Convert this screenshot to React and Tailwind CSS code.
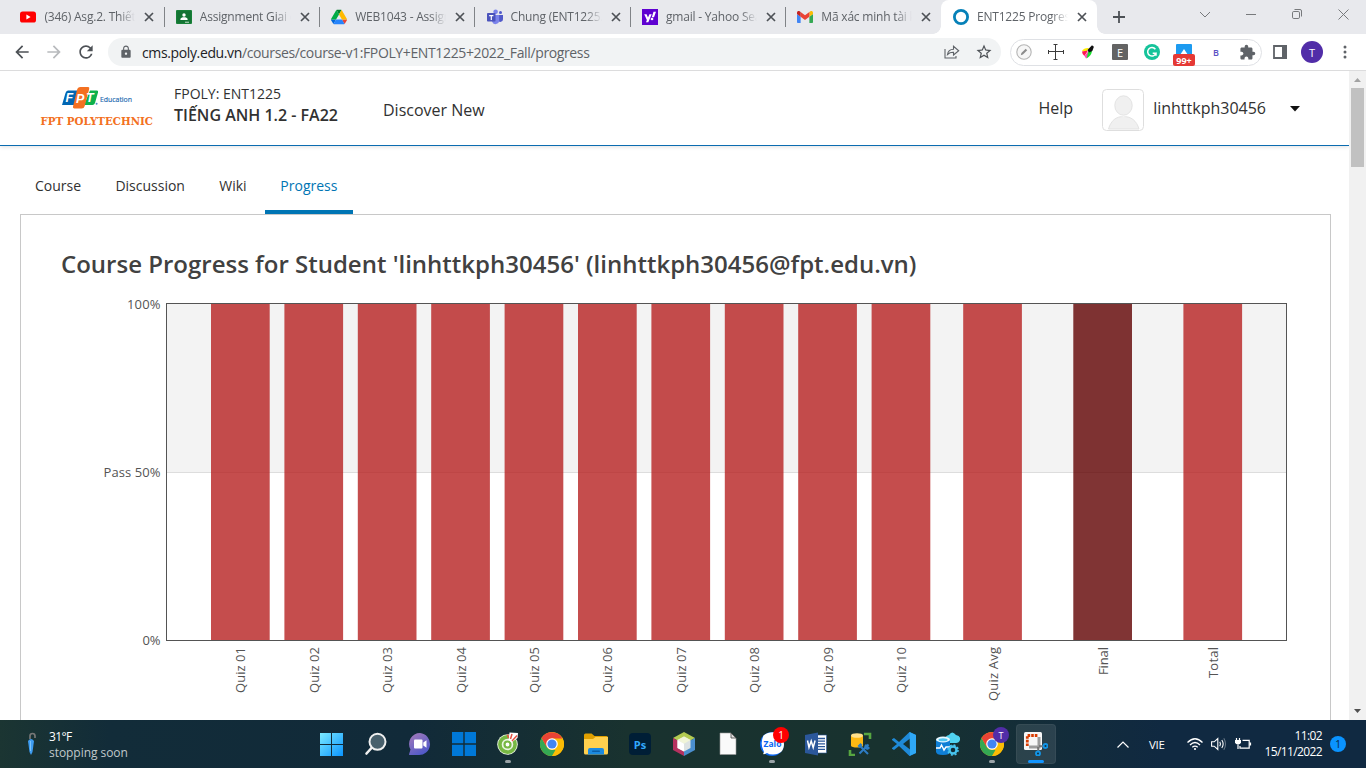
import React from 'react';
import { MdArrowBack, MdArrowForward, MdRefresh, MdLock, MdStarBorder, MdExtension } from 'react-icons/md';

/* ---------- tab favicons ---------- */
const Youtube = () => (
  <svg width="16" height="16" viewBox="0 0 16 16">
    <rect x="0" y="2.4" width="16" height="11.2" rx="2.6" fill="#f00" />
    <path d="M6.4 5.6v4.8l4.2-2.4z" fill="#fff" />
  </svg>
);
const Classroom = () => (
  <svg width="16" height="16" viewBox="0 0 16 16">
    <rect y="1" width="16" height="14" rx="1" fill="#188038" />
    <rect x="1.2" y="2.2" width="13.6" height="11.6" fill="#137333" />
    <circle cx="8" cy="6" r="1.7" fill="#fff" />
    <path d="M4.4 11v-.8C4.4 8.8 6.4 8.3 8 8.3s3.6.5 3.6 1.900V11z" fill="#fff" />
    <rect x="9" y="12.600" width="4" height="1.4" fill="#e8f5e9" opacity=".6" />
  </svg>
);
const Drive = () => (
  <svg width="16" height="16" viewBox="0 0 87.300 78">
    <path d="m6.600 66.850 3.850 6.650c.8 1.400 1.950 2.500 3.300 3.300l13.750-23.800h-27.500c0 1.550.4 3.100 1.200 4.500z" fill="#0066da" />
    <path d="m43.650 25-13.750-23.800c-1.350.8-2.500 1.900-3.300 3.300l-25.400 44a9.060 9.060 0 0 0-1.200 4.500h27.500z" fill="#00ac47" />
    <path d="m73.550 76.800c1.350-.8 2.500-1.900 3.300-3.300l1.600-2.750 7.650-13.250c.8-1.400 1.200-2.950 1.200-4.500h-27.500l5.850 11.500z" fill="#ea4335" />
    <path d="m43.650 25 13.750-23.800c-1.350-.8-2.900-1.200-4.500-1.200h-18.500c-1.600 0-3.150.45-4.500 1.200z" fill="#00832d" />
    <path d="m59.800 53h-32.300l-13.750 23.800c1.350.8 2.900 1.200 4.500 1.200h50.800c1.600 0 3.150-.45 4.500-1.200z" fill="#2684fc" />
    <path d="m73.400 26.500-12.700-22c-.8-1.400-1.950-2.500-3.300-3.300l-13.750 23.800 16.150 28h27.450c0-1.550-.4-3.100-1.200-4.500z" fill="#ffba00" />
  </svg>
);
const Teams = () => (
  <svg width="16" height="16" viewBox="0 0 16 16">
    <circle cx="8.600" cy="2.800" r="2.300" fill="#7b83eb" />
    <circle cx="13.500" cy="3.600" r="1.500" fill="#5059c9" />
    <path d="M11 6h5v4.300a2.600 2.600 0 0 1-5 1z" fill="#5059c9" />
    <path d="M5 6h7.200v5.600a3.700 3.700 0 0 1-7.200 1z" fill="#7b83eb" />
    <rect x="0" y="4" width="8.500" height="8.500" rx=".8" fill="#4b53bc" />
    <path d="M2.200 6.100h4.200v1.100H4.900v3.700H3.700V7.200H2.200z" fill="#fff" />
  </svg>
);
const Yahoo = () => (
  <svg width="16" height="16" viewBox="0 0 16 16">
    <rect width="16" height="16" fill="#5f01d1" />
    <path d="M2.200 5.200h2.400l1.400 3.400 1.400-3.400h2.300L6.300 13.300H4L4.900 11zM11.500 2.700h2.500L12 8.200H9.800z" fill="#fff" />
    <circle cx="10" cy="10" r="1.350" fill="#fff" />
  </svg>
);
const Gmail = () => (
  <svg width="16" height="16" viewBox="52 42 88 66">
    <path fill="#4285f4" d="M58 108h14V74L52 59v43c0 3.320 2.690 6 6 6" />
    <path fill="#34a853" d="M120 108h14c3.320 0 6-2.690 6-6V59l-20 15" />
    <path fill="#fbbc04" d="M120 48v26l20-15v-8c0-7.420-8.470-11.650-14.400-7.200" />
    <path fill="#ea4335" d="M72 74V48l24 18 24-18v26L96 92" />
    <path fill="#c5221f" d="M52 51v8l20 15V48l-5.600-4.200c-5.940-4.450-14.400-.220-14.400 7.200" />
  </svg>
);
const Ring = () => (
  <svg width="16" height="16" viewBox="0 0 16 16">
    <circle cx="8" cy="8" r="6.600" fill="none" stroke="#0681b8" strokeWidth="2.800" />
  </svg>
);
const Close = () => (
  <svg width="10" height="10" viewBox="0 0 10 10" className="shrink-0">
    <path d="M1 1l8 8M9 1l-8 8" stroke="#4d5156" strokeWidth="1.700" />
  </svg>
);

const tabs = [
  { icon: Youtube, label: '(346) Asg.2. Thiết' },
  { icon: Classroom, label: 'Assignment Giai đ' },
  { icon: Drive, label: 'WEB1043 - Assign' },
  { icon: Teams, label: 'Chung (ENT1225.' },
  { icon: Yahoo, label: 'gmail - Yahoo Sear' },
  { icon: Gmail, label: 'Mã xác minh tài k' },
];

const TabBody = ({ icon: Icon, label }) => (
  <>
    <Icon />
    <div className="ml-2 mr-[9px] w-[91px] shrink-0 overflow-hidden whitespace-nowrap text-[12px] tracking-[-0.2px] text-[#5f6368] [mask-image:linear-gradient(to_right,#000_82%,transparent)]">
      {label}
    </div>
    <Close />
  </>
);

function TabStrip() {
  return (
    <div className="flex h-[34px] bg-[#e8e9ed] pl-[8.6px]">
      {tabs.map((t, i) => (
        <div key={t.label} className="relative flex w-[155.4px] shrink-0 items-center pl-[11.800px]">
          <TabBody {...t} />
          {i < 5 && <span className="absolute -right-[0.6px] top-[7px] h-5 w-px bg-[#808387]" />}
        </div>
      ))}
      <div className="relative flex w-[156px] shrink-0 items-center rounded-t-lg bg-white pl-[12px]">
        <TabBody icon={Ring} label="ENT1225 Progress" />
        <span className="absolute -left-2 bottom-0 size-2 bg-[radial-gradient(circle_at_0_0,#e8e9ed_7.5px,#fff_8px)]" />
        <span className="absolute -right-2 bottom-0 size-2 bg-[radial-gradient(circle_at_100%_0,#e8e9ed_7.5px,#fff_8px)]" />
      </div>
      <div className="flex flex-1 items-center pl-[16px]">
        <svg width="12" height="12" viewBox="0 0 12 12"><path d="M6 0v12M0 6h12" stroke="#4d5156" strokeWidth="1.800" /></svg>
        <div className="mb-[6px] ml-auto flex items-center pr-[17px] text-[#77797c]">
          <svg width="10" height="10" viewBox="0 0 10 10" fill="none" stroke="currentColor"><path d="M0 3l5 5 5-5" /></svg>
          <svg className="ml-[36px]" width="10" height="10" viewBox="0 0 10 10" stroke="currentColor"><path d="M0 5.500h10" /></svg>
          <svg className="ml-[36px]" width="10" height="10" viewBox="0 0 10 10" fill="none" stroke="currentColor"><rect x=".5" y="2.500" width="7" height="7" rx="1.300" /><path d="M2.500.5H8A1.500 1.500 0 0 1 9.500 2v5.500" /></svg>
          <svg className="ml-[36px]" width="11" height="11" viewBox="0 0 11 11" stroke="currentColor"><path d="M.5.5l10 10M10.500.5l-10 10" /></svg>
        </div>
      </div>
    </div>
  );
}

function Extensions() {
  return (
    <div className="ml-[9px] flex h-[27px] w-[252px] shrink-0 items-center rounded-full border border-[#dfe1e5] pl-[5px]">
      <svg width="16" height="16" viewBox="0 0 16 16"><circle cx="8" cy="8" r="7.200" fill="#f6f6f6" stroke="#b5b5b5" strokeWidth="1.100" /><path d="M4.800 11.200l.6-2.100 4.300-4.300 1.500 1.500-4.300 4.300z" fill="#8b8b8b" /></svg>
      <svg className="ml-[16px]" width="16" height="16" viewBox="0 0 16 16" stroke="#3c3c3c" fill="none"><path d="M.5 6v4M.5 7.500h15M15.500 6v4M7.500 .5v15M5.500 .5h4M5.500 15.500h4" /></svg>
      <svg className="ml-[16px]" width="16" height="16" viewBox="0 0 16 16"><path d="M2 7Q4 3.500 9 4L6 8z" fill="#ffee00" /><path d="M2 7.500L8 6.500 4.500 12Q2 10 2 7.500z" fill="#ff1450" /><path d="M4.500 12L8.500 7l1 4.500L6 14.500z" fill="#ff4bb0" /><path d="M8.500 7h3.300Q12 11 6.500 14.500z" fill="#16e02a" /><path d="M7.500 6L12 1.300l1.900 1.500L12.300 7 9 8.500z" fill="#111" /></svg>
      <div className="ml-[16px] flex size-4 items-center justify-center rounded-[1px] bg-[#636363] text-[11px] leading-none text-white">E</div>
      <svg className="ml-[16px]" width="16" height="16" viewBox="0 0 16 16"><circle cx="8" cy="8" r="8" fill="#15c39a" /><path d="M11.400 5.200A4.300 4.300 0 1 0 12 9.300H8.700M12 9.300v2.400" fill="none" stroke="#fff" strokeWidth="1.500" /></svg>
      <div className="relative ml-[16px] size-4 rounded-[1px] bg-[#1d9bf0]">
        <svg width="16" height="16" viewBox="0 0 16 16"><path d="M8 5l4 6H4z" fill="#fff" /></svg>
        <span className="absolute -left-[3px] top-[10px] flex h-[12px] w-[22px] items-center justify-center rounded-[2px] bg-[#e53935] text-[9px] font-bold leading-none text-white">99+</span>
      </div>
      <div className="ml-[16px] w-4 text-center text-[9px] font-semibold leading-none text-[#5b50c4]">B</div>
      <MdExtension className="ml-[15px] size-[17px] text-[#5f6368]" />
    </div>
  );
}

function Toolbar() {
  return (
    <div className="flex h-[37px] items-center border-b border-[#dcdcdd] bg-white text-[#4d5156]">
      <MdArrowBack className="ml-[12px] size-5" />
      <MdArrowForward className="ml-[12px] size-5 text-[#b8babd]" />
      <MdRefresh className="ml-[12px] size-5" />
      <div className="ml-[12px] flex h-7 w-[893px] shrink-0 items-center rounded-full bg-[#f1f3f4] pl-[11px]">
        <MdLock className="size-[14px] text-[#5f6368]" />
        <div className="ml-[9px] whitespace-nowrap text-[14px] tracking-[-0.37px] text-[#5f6368]">
          <span className="text-[#202124]">cms.poly.edu.vn</span>/courses/course-v1:FPOLY+ENT1225+2022_Fall/progress
        </div>
        <svg className="ml-auto" width="16" height="14" viewBox="0 0 16 14" fill="none" stroke="#5f6368" strokeWidth="1.100"><path d="M1 4v9h11v-2M3.500 9.500C4 6 6 4.300 9.500 4.200V1.300L14.700 5.800 9.500 10V7.300C6.800 7.200 5 8 3.500 9.500z" /></svg>
        <MdStarBorder className="ml-[15px] mr-[8px] size-[18px]" />
      </div>
      <Extensions />
      <svg className="ml-[11px]" width="14" height="14" viewBox="0 0 14 14"><path d="M1 1h12v12H1z" fill="none" stroke="#5f6368" strokeWidth="1.800" /><path d="M9 0h5v14H9z" fill="#5f6368" /></svg>
      <div className="ml-[14px] flex size-[22px] items-center justify-center rounded-full bg-[#512da8] text-[11px] leading-none text-white">T</div>
      <svg className="ml-[20px]" width="4" height="16" viewBox="0 0 4 16" fill="#5f6368"><circle cx="2" cy="3" r="1.500" /><circle cx="2" cy="8" r="1.500" /><circle cx="2" cy="13" r="1.500" /></svg>
    </div>
  );
}

const Logo = () => (
  <svg width="116" height="44" viewBox="0 0 116 44" className="shrink-0">
    <g transform="translate(1 0)">
      <path d="M28 3.500h11l-4 14.500H22l3.500-12q.7-2.500 2.500-2.500z" fill="#0066b3" />
      <path d="M50 3.500h7q1.500 0 1 2l-3 10.500q-.7 2-2.500 2H44z" fill="#0db14b" />
      <path d="M40.500 0h7.700q1.500 0 1 2l-4.500 17q-.7 2.500-3 2.500h-7.200q-2 0-1.500-2l4-16.500q.7-3 3.500-3z" fill="#f37021" />
      <g fontFamily="Liberation Sans" fontStyle="italic" fontWeight="700" fontSize="12.500" fill="#fff">
        <text x="25.500" y="15">F</text><text x="36" y="15.500">P</text><text x="46" y="15">T</text>
      </g>
      <circle cx="56.600" cy="16.800" r="1" fill="#4f8fc6" />
    </g>
    <text x="61" y="15" fontFamily="Open Sans" fontSize="7.400" fill="#1666ae" stroke="#1666ae" strokeWidth=".15" textLength="32" lengthAdjust="spacingAndGlyphs">Education</text>
    <text x="1.500" y="37.500" fontFamily="DejaVu Serif, serif" fontWeight="700" fontSize="11" fill="#f37021" textLength="112.500" lengthAdjust="spacingAndGlyphs">FPT POLYTECHNIC</text>
  </svg>
);

function SiteHeader() {
  return (
    <header className="flex h-[75px] shrink-0 border-b border-[#0b6cb0] pl-[39px] text-[#313131] shadow-[0_1px_4px_rgba(0,0,0,0.12)]">
      <div className="pt-[16px]"><Logo /></div>
      <div className="ml-[19px] w-[209px] pt-[13px]">
        <div className="text-[14px] leading-[20px]">FPOLY: ENT1225</div>
        <div className="whitespace-nowrap text-[16px] font-semibold leading-[22px]">TIẾNG ANH 1.2 - FA22</div>
      </div>
      <div className="pt-[27px] text-[16px] leading-[24px]">Discover New</div>
      <div className="ml-auto flex pr-[49px] text-[16px] leading-[24px]">
        <span className="mt-[25px]">Help</span>
        <svg className="ml-[29px] mt-[18px]" width="42" height="42" viewBox="0 0 42 42" fill="#f0f0f0" stroke="#e3e3e3">
          <rect x=".5" y=".5" width="41" height="41" rx="4" fill="#fff" stroke="#dedede" />
          <path d="M6.500 40C9 31.500 14 27.500 21.500 27.500S34.500 31.500 37 40z" /><ellipse cx="21.500" cy="16.500" rx="8.700" ry="9.700" stroke="#fff" strokeWidth="2.500" /><ellipse cx="21.500" cy="16.500" rx="8.700" ry="9.700" />
        </svg>
        <span className="ml-[9px] mt-[25px]">linhttkph30456</span>
        <svg className="ml-[24px] mt-[35px]" width="10" height="6" viewBox="0 0 10 6"><path d="M0 0h10L5 5.500z" fill="#111" /></svg>
      </div>
    </header>
  );
}

/* ---------- grade chart ---------- */
const bars = [
  ...Array.from({ length: 10 }, (_, i) => ({ x: 151 + i * 73.4, label: 'Quiz ' + String(i + 1).padStart(2, '0'), len: 46 })),
  { x: 903.2, label: 'Quiz Avg', len: 54 },
  { x: 1013.3, label: 'Final', len: 28 },
  { x: 1123.4, label: 'Total', len: 31 },
];
const Chart = () => (
  <svg width="1236" height="420" viewBox="0 0 1236 420" fontFamily="Open Sans, sans-serif" fontSize="13" fill="#545454" className="shrink-0">
    <rect x="107" y="10" width="1119" height="168" fill="#f3f3f3" />
    <path d="M107 178.500h1119" stroke="#ddd" />
    {bars.map((b) => (
      <rect key={b.label} x={b.x} y="10" width="58.700" height="336" fill={b.label === 'Final' ? '#600101' : '#b72121'} opacity=".8" />
    ))}
    <rect x="106.500" y="9.500" width="1120" height="337" fill="none" stroke="#545454" />
    <g textAnchor="end">
      <text x="100.500" y="15" textLength="33.500">100%</text>
      <text x="100.500" y="183" textLength="57">Pass 50%</text>
      <text x="100.500" y="351" textLength="18">0%</text>
    </g>
    {bars.map((b) => (
      <text key={b.label} transform={`translate(${b.x + 34.3} ${b.len + 353}) rotate(-90)`} textLength={b.len}>{b.label}</text>
    ))}
  </svg>
);

const nav = ['Course', 'Discussion', 'Wiki'];
function Page() {
  return (
    <div className="flex h-[649px] overflow-hidden bg-white">
      <main className="flex w-[1349px] shrink-0 flex-col overflow-hidden">
        <SiteHeader />
        <nav className="flex h-[68px] shrink-0 pl-[35px] text-[14px] leading-[20px] text-[#313131]">
          {nav.map((n) => <span key={n} className="mr-[34.3px] mt-[30px]">{n}</span>)}
          <span className="-ml-[16px] w-[88px] border-b-4 border-[#0075b4] pt-[30px] text-center text-[#0075b4]">Progress</span>
        </nav>
        <section className="ml-5 flex h-[520px] w-[1311px] shrink-0 flex-col border border-[#c8c8c8] pl-[40px] pt-[32px]">
          <h1 className="h-[47px] shrink-0 whitespace-nowrap text-[24px] font-semibold leading-[34px] text-[#414141]">
            Course Progress for Student 'linhttkph30456' (linhttkph30456@fpt.edu.vn)
          </h1>
          <div className="-ml-px"><Chart /></div>
        </section>
      </main>
      <div className="flex flex-1 flex-col items-center bg-[#f1f1f1]">
        <svg width="17" height="17" viewBox="0 0 17 17"><path d="M5 11h7L8.500 7z" fill="#a3a3a3" /></svg>
        <div className="h-[79px] w-[13px] bg-[#c1c1c1]" />
        <svg className="mt-auto" width="17" height="17" viewBox="0 0 17 17"><path d="M5 6h7l-3.500 4z" fill="#505050" /></svg>
      </div>
    </div>
  );
}

/* ---------- taskbar ---------- */
const Ico = ({ children, s = 24 }) => <svg width={s} height={s} viewBox="0 0 24 24">{children}</svg>;
const WinStart = () => (
  <Ico><defs><linearGradient id="ws" x1="0" y1="0" x2="1" y2="1" gradientUnits="objectBoundingBox"><stop offset="0" stopColor="#7ceaff" /><stop offset="1" stopColor="#0a94ff" /></linearGradient></defs>
    <path d="M0 1h11v11H0zM12 1h11v11H12zM0 13h11v11H0zM12 13h11v11H12z" fill="url(#ws)" /></Ico>
);
const Search = () => (
  <Ico><circle cx="13.500" cy="9.800" r="8" fill="#48606c" stroke="#f0f0f0" strokeWidth="2" /><path d="M7.500 16L2.500 21.500" stroke="#f0f0f0" strokeWidth="2.600" strokeLinecap="round" /></Ico>
);
const Chat = () => (
  <Ico><defs><linearGradient id="ch" x1="0" y1="0" x2=".6" y2="1"><stop offset="0" stopColor="#a77bb8" /><stop offset="1" stopColor="#5059c9" /></linearGradient></defs>
    <path d="M12 1a11 11 0 1 1-2 22H1.500q-.8-.3-.3-1.200l1.300-4.300A11 11 0 0 1 12 1z" fill="url(#ch)" /><rect x="6" y="7.500" width="8.500" height="9" rx="1" fill="#fff" /><path d="M15.300 10.500l3.200-2.200v7.400l-3.200-2.200z" fill="#fff" /></Ico>
);
const Win10 = () => <Ico><path d="M0 0h11.300v11.300H0zM12.700 0H24v11.300H12.700zM0 12.700h11.300V24H0zM12.700 12.700H24V24H12.700z" fill="#0078d7" /></Ico>;
const CocCoc = () => (
  <Ico><circle cx="11.500" cy="12.500" r="10.300" fill="#eaf5e2" /><circle cx="11.500" cy="12.500" r="7.600" fill="none" stroke="#77b843" strokeWidth="3.600" /><circle cx="11.500" cy="12.500" r="3" fill="#fff" stroke="#77b843" strokeWidth="2.200" /><path d="M12.500 8l1-7.500 8.500.5-.5 5L15.500 10.500z" fill="#fff" /><path d="M12.500 6l-1-3.500M14.500 7l1.500-5M16 9l5-5.500" stroke="#e55344" strokeWidth="1.500" /></Ico>
);
const Chrome = () => (
  <Ico><circle cx="12" cy="12" r="12" fill="#fbbc05" /><path d="M1.600 6l5.200 9a6 6 0 0 0 5.200 3h5.200L12 24A12 12 0 0 1 1.600 6z" fill="#34a853" /><path d="M17.200 15L12 24a12 12 0 0 0 10.400-18H12z" fill="#fbbc05" /><path d="M1.600 6A12 12 0 0 1 22.400 6.400H12L6.800 15z" fill="#ea4335" /><circle cx="12" cy="12" r="5.800" fill="#fff" /><circle cx="12" cy="12" r="4.600" fill="#4285f4" /></Ico>
);
const Folder = () => (
  <Ico><path d="M0 3q0-1.500 1.500-1.500h6L10.500 4H22.500Q24 4 24 5.500V12H0z" fill="#e0a000" /><path d="M0 7h9l2.500-2H24v16q0 1.500-1.500 1.500h-21Q0 22.500 0 21z" fill="#ffd04e" /><path d="M4 22.500V18q0-2 2-2h12q2 0 2 2v4.500z" fill="#1b8ae0" /><rect x="8" y="18.500" width="8" height="1.500" rx=".7" fill="#0b5ea8" /></Ico>
);
const Photoshop = () => (
  <div className="flex size-[22px] items-center justify-center rounded-[4px] bg-[#001e36] text-[11px] font-bold leading-none text-[#31a8ff]">Ps</div>
);
const NetBeans = () => (
  <Ico><path d="M12 0l11 6-11 6L1 6z" fill="#b3cb52" /><path d="M1 6l11 6v12L1 18z" fill="#b5315f" /><path d="M23 6l-11 6v12l11-6z" fill="#4b8fcf" /><path d="M12 4.500l6.500 3.600v7.800L12 19.500l-6.500-3.600V8.100z" fill="#dde3e3" /><path d="M12 4.500l6.500 3.600L12 11.700 5.500 8.100z" fill="#f1f5d8" /><path d="M5.500 8.100L12 11.700v7.800l-6.500-3.600z" fill="#fff" /></Ico>
);
const Doc = () => <Ico><path d="M4 1h11l5 5v16.500H4z" fill="#fafafa" stroke="#999" strokeWidth=".6" /><path d="M15 1v5h5z" fill="#ddd" stroke="#444" strokeWidth=".8" /></Ico>;
const Zalo = () => (
  <Ico><circle cx="12" cy="12" r="12" fill="#0b67f3" /><path d="M3.500 3.500Q8 0 14 .3 24 2 24 12t-11 10.500q-4 0-6-1.500-2 1.500-4 1 1.300-1.500.7-3-4-7.500-.2-15.500z" fill="#fff" /><text x="3.500" y="14.800" fontFamily="Open Sans" fontWeight="700" fontSize="8.500" fill="#0b67f3">Zalo</text></Ico>
);
const Word = () => (
  <Ico><rect x="10" y="3" width="12.500" height="18" fill="#fff" stroke="#2b579a" strokeWidth=".6" /><path d="M13 6.500h8M13 9.200h8M13 11.900h8M13 14.600h8M13 17.300h8" stroke="#2b579a" strokeWidth="1.300" /><path d="M1 3l13-2.500v23L1 21z" fill="#2b579a" /><path d="M3.500 8.500l1.500 7 2.200-6.500 2 6.500 1.900-7" fill="none" stroke="#fff" strokeWidth="1.500" /></Ico>
);
const Ssms = () => (
  <Ico><path d="M16 2h6v5M2 18v5h5" fill="none" stroke="#57a641" strokeWidth="2.600" /><path d="M3 3.500v10c0 2.700 12 2.700 12 0v-10z" fill="#fcb813" /><ellipse cx="9" cy="3.500" rx="6" ry="2.300" fill="#ffe08a" /><path d="M11 13l9 9M20.500 12.500l-9 9" stroke="#2d7cc4" strokeWidth="2" /><path d="M9.500 14l3-3 2 2-3 3zM18 12a3 3 0 1 0 4 4" fill="#2d7cc4" /></Ico>
);
const VsCode = () => (
  <Ico><path d="M17.500 0L24 3v18l-6.500 3L7 14l-5 4-2-1.200V16l5-4-5-4v-.8L2 6l5 4zM18 6.500L11 12l7 5.500z" fill="#1f8ad8" fillRule="evenodd" /><path d="M17.500 0L24 3v18l-6.500 3 .5-1z" fill="#2fa8f6" /></Ico>
);
const DataStudio = () => (
  <Ico><path d="M10 9q-2-5 3-6 3-5 7 0 5 1 4 5-1 3-4 3h-8z" fill="#50d2f0" /><path d="M0 7.500v12q0 3.500 7 3.500t7-3.500v-12z" fill="#0f7fd6" /><ellipse cx="7" cy="7.500" rx="7" ry="3" fill="#e8f7ff" /><ellipse cx="7" cy="7.800" rx="4.500" ry="1.500" fill="#50c6f0" /><path d="M0 16h4l1.500-3 2.500 5 2-3h4" stroke="#fff" strokeWidth="1.400" fill="none" /><circle cx="17" cy="18" r="3.500" fill="#102d38" stroke="#47c4ef" strokeWidth="2.400" /><circle cx="17" cy="18" r="5" fill="none" stroke="#47c4ef" strokeWidth="1.600" strokeDasharray="2 1.930" /></Ico>
);
const Snip = () => (
  <Ico><rect x="0" y="0" width="18" height="18" rx="1.500" fill="#f7f7f7" /><path d="M3.300 14V3.500H13.500" fill="none" stroke="#d83b01" strokeWidth="2.800" strokeDasharray="2.600 1" /><path d="M15 5v10H5" fill="none" stroke="#9c9c9c" strokeWidth="3" /><path d="M15 14l5 .5M14 15l.500 5" stroke="#777" strokeWidth="2" /><circle cx="21.500" cy="14" r="2" fill="#143246" stroke="#1295e8" strokeWidth="1.900" /><circle cx="14" cy="21.500" r="2" fill="#143246" stroke="#1295e8" strokeWidth="1.900" /></Ico>
);

const apps = [
  { I: WinStart }, { I: Search }, { I: Chat }, { I: Win10 }, { I: CocCoc, run: true }, { I: Chrome }, { I: Folder }, { I: Photoshop },
  { I: NetBeans }, { I: Doc }, { I: Zalo, run: true, badge: '1' }, { I: Word }, { I: Ssms }, { I: VsCode }, { I: DataStudio },
  { I: Chrome, run: true, badge: 'T' }, { I: Snip, active: true },
];

function Taskbar() {
  return (
    <div className="flex h-12 items-center bg-[linear-gradient(90deg,#1b3532_0,#122c39_8%,#112a39_30%,#19322f_46%,#18322f_65%,#102941_85%,#102941_100%)] text-[12px] text-white">
      <svg className="ml-[27px]" width="10" height="24" viewBox="0 0 10 24"><path d="M3 7V4q0-2.500 2.500-2.500T8 4v2" fill="none" stroke="#777" strokeWidth="1.700" /><path d="M1 9q3-4 6 0l-1.500 11L4 23l-1.500-3z" fill="#3e9df2" /><path d="M3.500 9v10" stroke="#8ccfff" strokeWidth=".8" /></svg>
      <div className="ml-[12px] w-[261px] pt-[2px] leading-[16px]">
        <div className="tracking-[-0.6px]">31°F</div>
        <div className="tracking-[-0.05px] text-[#c0c8cb]">stopping soon</div>
      </div>
      <div className="flex">
        {apps.map(({ I, run, badge, active }, i) => (
          <div key={i} className="relative flex h-12 w-11 items-center justify-center">
            {active && <span className="absolute inset-x-[2px] inset-y-1 rounded-[4px] border border-white/5 bg-white/10" />}
            <div className="relative flex"><I /></div>
            {badge === '1' && <span className="absolute left-[23px] top-[7px] flex size-4 items-center justify-center rounded-full bg-[#f00] text-[10px] leading-none">1</span>}
            {badge === 'T' && <span className="absolute left-[23px] top-[7px] flex size-4 items-center justify-center rounded-full bg-[#512da8] text-[9px] leading-none">T</span>}
            {run && <span className="absolute bottom-[5px] h-[3px] w-[6px] rounded-full bg-[#9aa3a7]" />}
            {active && <span className="absolute bottom-[5px] h-[3px] w-4 rounded-full bg-[#1295ff]" />}
          </div>
        ))}
      </div>
      <div className="ml-auto flex items-center pr-[20px]">
        <svg width="12" height="7" viewBox="0 0 12 7" fill="none" stroke="#fff" strokeWidth="1.200"><path d="M.5 6.500L6 1l5.500 5.500" /></svg>
        <span className="ml-[20px] w-[18px] pt-px text-[11.500px] tracking-[-0.3px]">VIE</span>
        <svg className="ml-[20px]" width="16" height="14" viewBox="0 0 16 14" fill="none" stroke="#fff" strokeWidth="1.300"><path d="M.5 5.500Q8-2 15.500 5.500M3 8Q8 3 13 8M5.300 10.300Q8 8 10.700 10.300" /><circle cx="8" cy="12" r="1.100" fill="#fff" stroke="none" /></svg>
        <svg className="ml-[8px]" width="16" height="14" viewBox="0 0 16 14" fill="none" stroke="#fff" strokeWidth="1.100"><path d="M.6 4.800h2.600L6.800 1.500v11L3.200 9.200H.6zM8.800 4.800q1.300 2.200 0 4.400M10.800 3q2.700 4 0 8" /><path d="M12.800 1.200q3.500 5.800 0 11.600" opacity=".35" /></svg>
        <svg className="ml-[8px]" width="17" height="14" viewBox="0 0 17 14" fill="none" stroke="#fff" strokeWidth="1.200"><path d="M7.500 3.300h6.700v7.900H5V9M15.500 5.500v3M3 7.500V12" /><path d="M1.500 1v2M4.500 1v2" /><path d="M0 3h6v2.500Q5.500 7.500 3 7.500T0 5.500z" fill="#fff" stroke="none" /></svg>
        <div className="ml-[14px] w-[56px] whitespace-nowrap text-right leading-[16px] tracking-[-0.62px]">
          <div>11:02</div><div className="-ml-4">15/11/2022</div>
        </div>
        <span className="ml-[8px] flex size-4 shrink-0 items-center justify-center rounded-full bg-[#0a93ff] text-[10px] leading-none text-[#06263c]">1</span>
      </div>
    </div>
  );
}

export default function App() {
  return (
    <div className="h-[768px] w-[1366px] overflow-hidden bg-white font-['Open_Sans',sans-serif]">
      <TabStrip />
      <Toolbar />
      <Page />
      <Taskbar />
    </div>
  );
}
